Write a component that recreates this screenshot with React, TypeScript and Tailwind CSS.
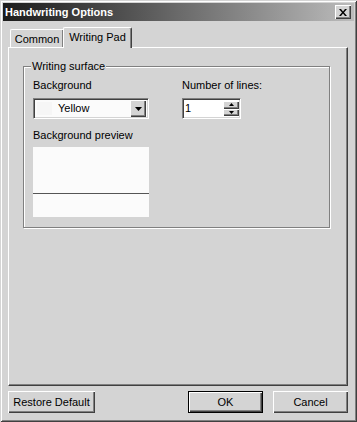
import React from "react";

const raised =
  "bg-[#d4d4d4] shadow-[inset_1px_1px_0_#ffffff,inset_-1px_-1px_0_#404040,inset_-2px_-2px_0_#808080]";

function Arrow({ up }: { up?: boolean }) {
  return (
    <svg width="7" height="4" viewBox="0 0 7 4" className="block">
      {up ? (
        <path d="M3.5 0 L7 4 L0 4 Z" fill="#000" />
      ) : (
        <path d="M0 0 L7 0 L3.5 4 Z" fill="#000" />
      )}
    </svg>
  );
}

function SmallArrow({ up }: { up?: boolean }) {
  return (
    <svg width="5" height="3" viewBox="0 0 5 3" className="block">
      {up ? (
        <path d="M2.5 0 L5 3 L0 3 Z" fill="#000" />
      ) : (
        <path d="M0 0 L5 0 L2.5 3 Z" fill="#000" />
      )}
    </svg>
  );
}

export default function App() {
  return (
    <div className="w-[357px] h-[422px] bg-[#d4d4d4] p-[3px] flex flex-col text-[11px] leading-[13px] text-black font-['Liberation_Sans',Arial,sans-serif] shadow-[inset_1px_1px_0_#d4d4d4,inset_-1px_-1px_0_#404040,inset_2px_2px_0_#ffffff,inset_-2px_-2px_0_#808080]">
      {/* Title bar */}
      <div className="h-[18px] flex items-center bg-linear-to-r from-[#1c1c1c] via-[#6a6a6a] to-[#bcbcbc]">
        <span className="pl-[2px] text-white font-bold text-[11px] leading-[13px]">
          Handwriting Options
        </span>
        <div className="flex-1" />
        <div className={`w-[16px] h-[14px] mr-[3px] flex items-center justify-center ${raised}`}>
          <svg width="8" height="7" viewBox="0 0 8 7">
            <path d="M0 0 L2 0 L4 2.5 L6 0 L8 0 L5 3.5 L8 7 L6 7 L4 4.5 L2 7 L0 7 L3 3.5 Z" fill="#000" />
          </svg>
        </div>
      </div>

      {/* Body */}
      <div className="flex-1 flex flex-col pl-[5px] pr-[6px]">
        {/* Tabs */}
        <div className="mt-[6px] h-[20px] flex items-end pl-[2px]">
          <div className="h-[18px] w-[53px] flex items-center justify-center border-t border-l border-white rounded-tl-[2px] shadow-[inset_-1px_0_0_#808080]">
            <span className="pt-[1px]">Common</span>
          </div>
          <div className="relative z-10 -mb-px h-[21px] w-[69px] flex items-start justify-center pt-[3px] bg-[#d4d4d4] border-t border-l border-white border-r border-r-[#404040] rounded-t-[2px] shadow-[inset_-1px_0_0_#808080]">
            <span>Writing Pad</span>
          </div>
        </div>

        {/* Panel */}
        <div className="flex-1 border-t border-l border-white border-r border-b border-r-[#404040] border-b-[#404040] shadow-[inset_-1px_-1px_0_#808080] pl-[14px] pt-[18px]">
          {/* Group box */}
          <div className="relative w-[307px] h-[162px] border border-[#808080] shadow-[inset_1px_1px_0_#ffffff,1px_1px_0_#ffffff] pl-[9px] pt-[12px] flex">
            <span className="absolute -top-[7px] left-[7px] px-[1px] bg-[#d4d4d4]">
              Writing surface
            </span>

            {/* Left column */}
            <div className="w-[116px] flex flex-col">
              <span>Background</span>
              <div className="mt-[6px] h-[21px] w-[116px] bg-[#fbfbfb] border border-t-[#808080] border-l-[#808080] border-r-white border-b-white shadow-[inset_1px_1px_0_#404040,inset_-1px_-1px_0_#d4d4d4] flex items-center pl-[3px] pr-[2px]">
                <div className="w-[15px] h-[13px] bg-[#f6f6f6]" />
                <span className="ml-[6px] flex-1">Yellow</span>
                <div className={`w-[16px] h-[17px] flex items-center justify-center ${raised}`}>
                  <Arrow />
                </div>
              </div>
              <span className="mt-[10px]">Background preview</span>
              <div className="mt-[5px] h-[70px] w-[116px] bg-[#fbfbfb] flex flex-col">
                <div className="h-[46px]" />
                <div className="h-[1px] bg-[#555555]" />
              </div>
            </div>

            {/* Right column */}
            <div className="ml-[33px] flex flex-col">
              <span>Number of lines:</span>
              <div className="mt-[6px] h-[21px] w-[59px] bg-white border border-t-[#808080] border-l-[#808080] border-r-white border-b-white shadow-[inset_1px_1px_0_#404040,inset_-1px_-1px_0_#d4d4d4] flex items-stretch pl-[2px] py-[2px] pr-[1px]">
                <span className="flex-1 flex items-center">1</span>
                <div className="w-[16px] flex flex-col">
                  <div className={`flex-1 flex items-center justify-center ${raised}`}>
                    <SmallArrow up />
                  </div>
                  <div className={`flex-1 flex items-center justify-center ${raised}`}>
                    <SmallArrow />
                  </div>
                </div>
              </div>
            </div>
          </div>
        </div>

        {/* Buttons */}
        <div className="mt-[5px] mb-[6px] h-[22px] flex">
          <div className={`w-[87px] h-[22px] flex items-center justify-center ${raised}`}>
            Restore Default
          </div>
          <div className="flex-1" />
          <div className="w-[75px] h-[22px] border border-black">
            <div className={`w-full h-full flex items-center justify-center ${raised}`}>OK</div>
          </div>
          <div className={`ml-[10px] w-[75px] h-[22px] flex items-center justify-center ${raised}`}>
            Cancel
          </div>
        </div>
      </div>
    </div>
  );
}
